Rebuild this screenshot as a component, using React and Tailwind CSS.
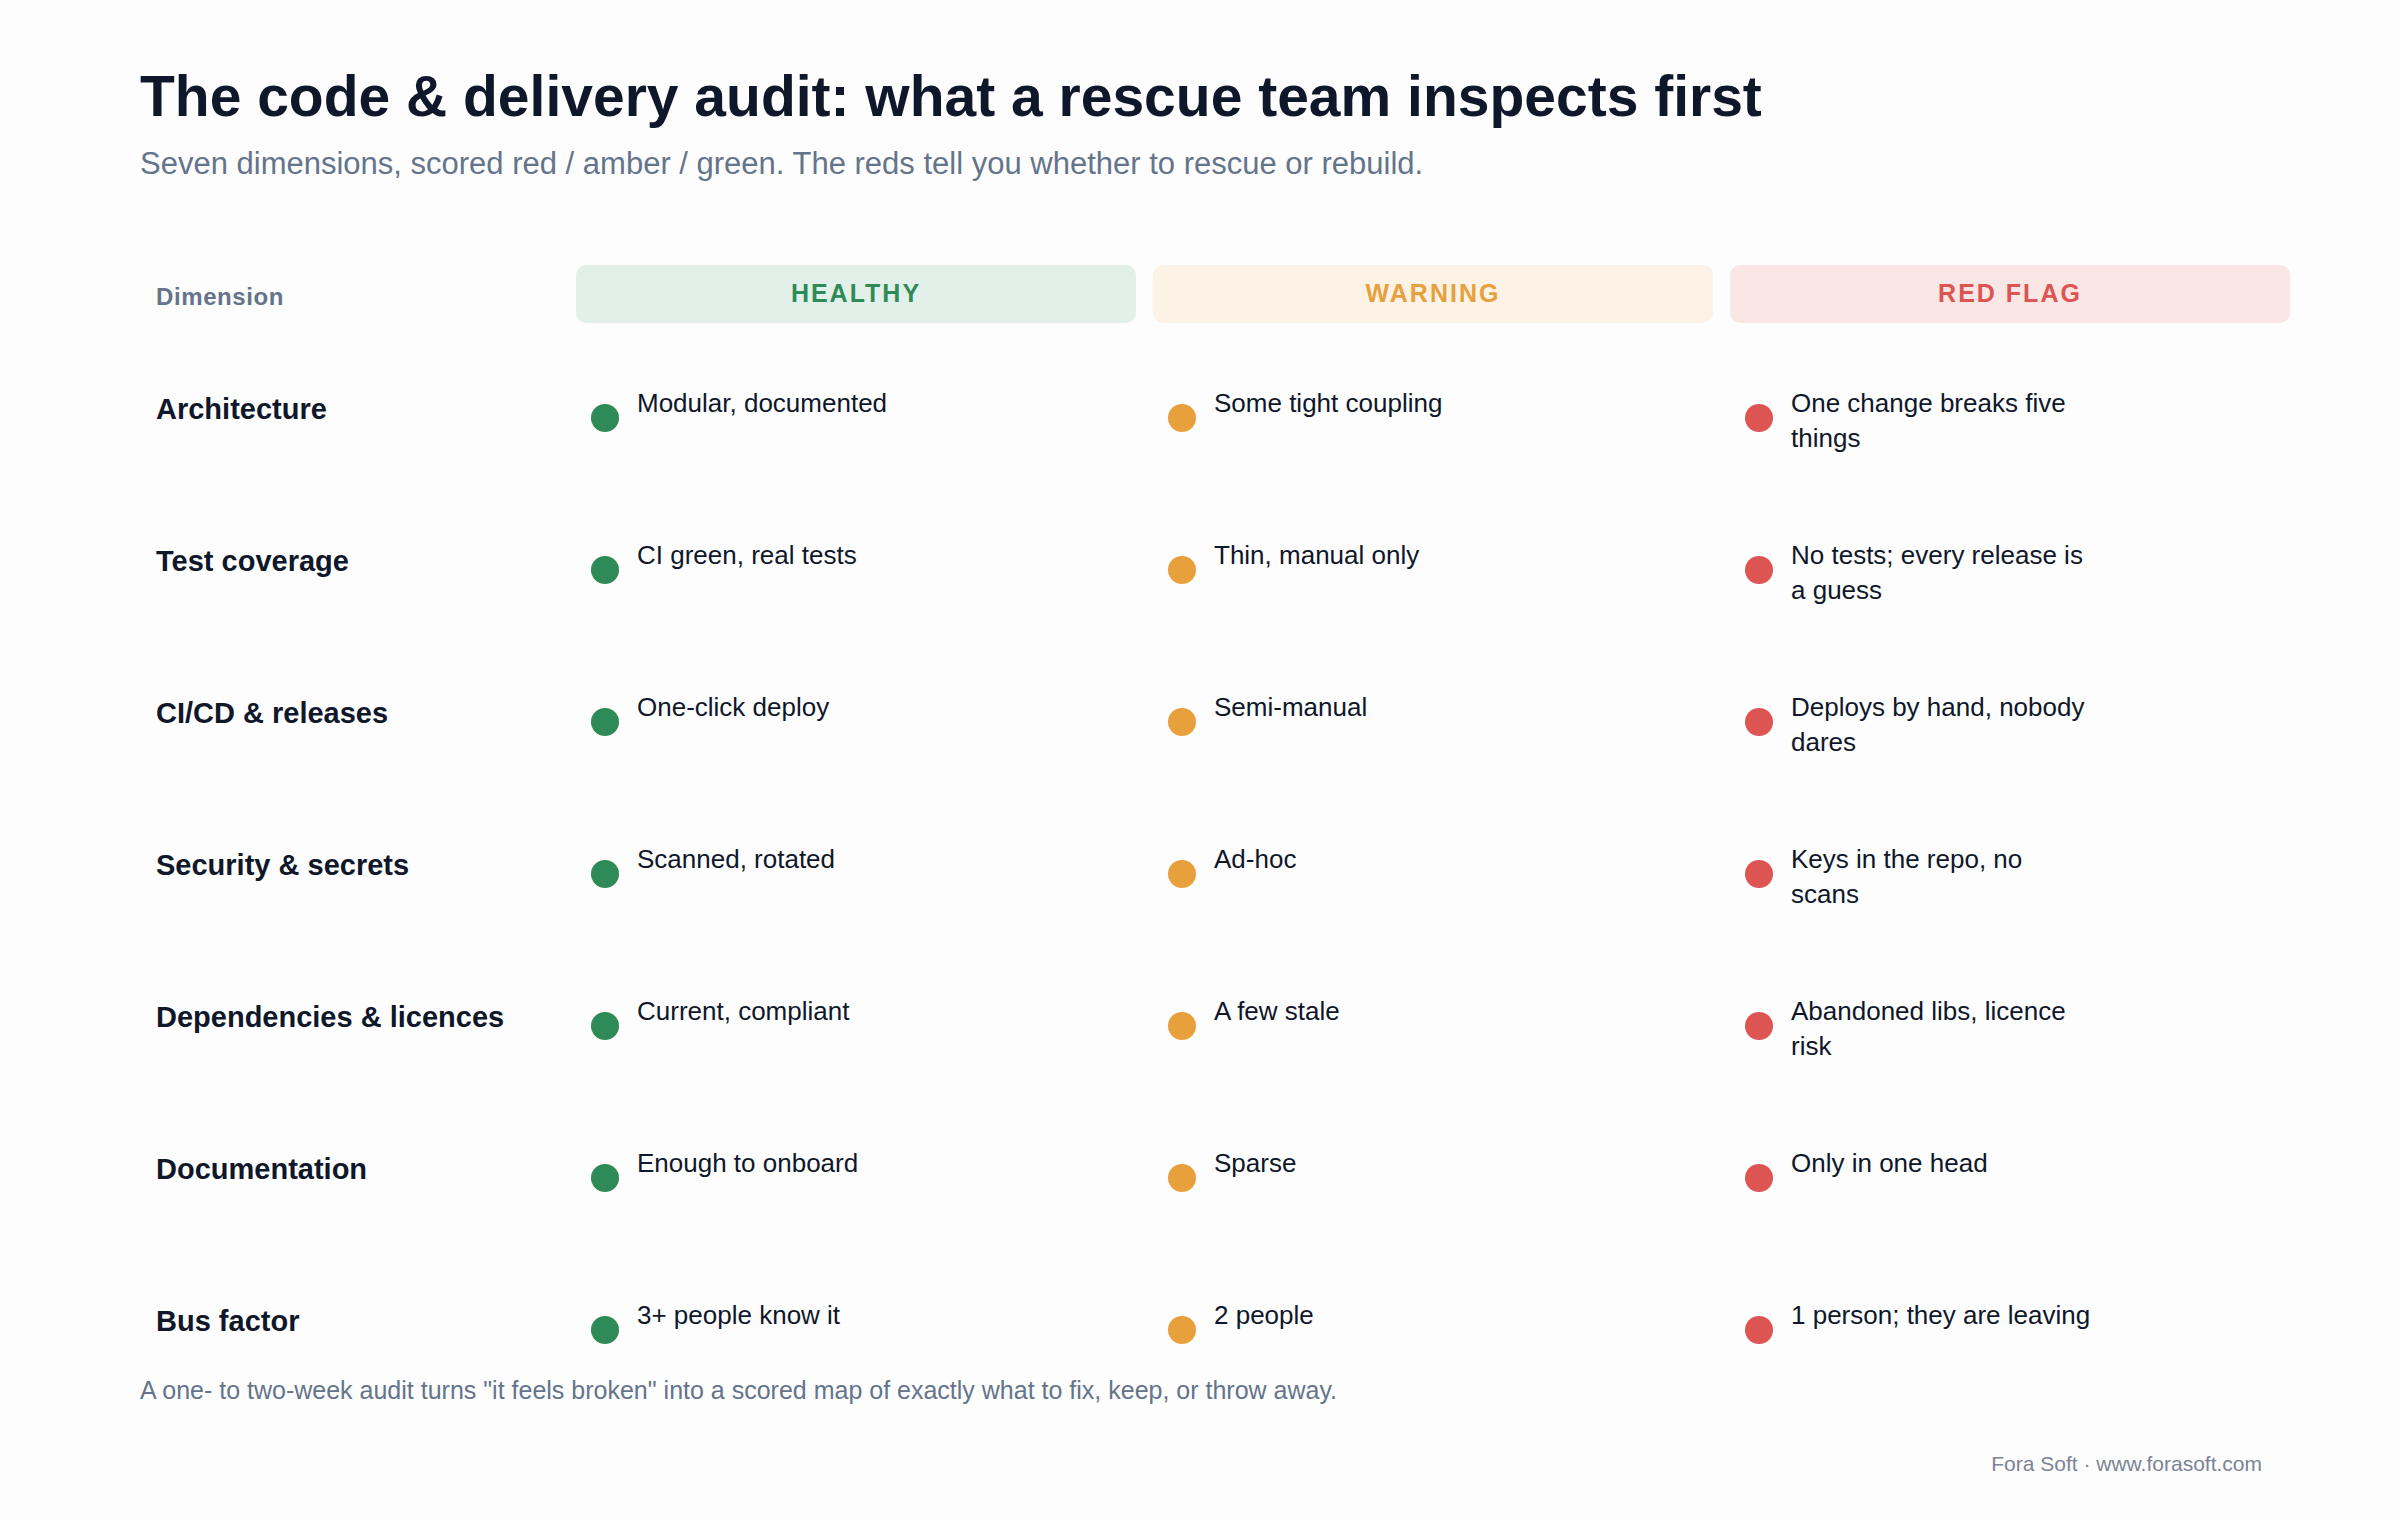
const rows = [
  ["Architecture", "Modular, documented", "Some tight coupling", "One change breaks five things"],
  ["Test coverage", "CI green, real tests", "Thin, manual only", "No tests; every release is a guess"],
  ["CI/CD & releases", "One-click deploy", "Semi-manual", "Deploys by hand, nobody dares"],
  ["Security & secrets", "Scanned, rotated", "Ad-hoc", "Keys in the repo, no scans"],
  ["Dependencies & licences", "Current, compliant", "A few stale", "Abandoned libs, licence risk"],
  ["Documentation", "Enough to onboard", "Sparse", "Only in one head"],
  ["Bus factor", "3+ people know it", "2 people", "1 person; they are leaving"],
];
const dots = ["bg-[#2e8b57]", "bg-[#e8a03c]", "bg-[#dc5552]"];

function Cell({ text, dot }) {
  return (
    <div className="flex items-start pl-[15px]">
      <span className={`mt-[34px] w-[28px] h-[28px] rounded-full shrink-0 ${dot}`} />
      <span className="ml-[18px] mt-[16px] max-w-[306px] text-[26px] leading-[35px] text-[#0f172a]">{text}</span>
    </div>
  );
}

export default function App() {
  return (
    <div className="w-[2400px] h-[1520px] bg-[#fdfdfd] px-[140px] pt-[62px] relative" style={{ fontFamily: '"Liberation Sans", Arial, sans-serif' }}>
      <h1 className="text-[57px] leading-[68px] font-bold text-[#0f172a]">The code &amp; delivery audit: what a rescue team inspects first</h1>
      <p className="mt-[16px] text-[31px] leading-[36px] text-[#64748b]">Seven dimensions, scored red / amber / green. The reds tell you whether to rescue or rebuild.</p>
      <div className="mt-[83px] grid grid-cols-[419px_560px_560px_560px] gap-x-[17px]">
        <div className="flex items-center pl-[16px] pt-[6px] text-[24px] font-bold text-[#64748b] tracking-wide h-[58px]">Dimension</div>
        <div className="h-[58px] rounded-[10px] bg-[#e3f0ea] flex items-center justify-center text-[25px] font-bold tracking-[0.08em] text-[#2e8b57]">HEALTHY</div>
        <div className="h-[58px] rounded-[10px] bg-[#fcf2e6] flex items-center justify-center text-[25px] font-bold tracking-[0.08em] text-[#e8a03c]">WARNING</div>
        <div className="h-[58px] rounded-[10px] bg-[#fae6e4] flex items-center justify-center text-[25px] font-bold tracking-[0.08em] text-[#dc5552]">RED FLAG</div>
      </div>
      <div className="mt-[47px] flex flex-col">
        {rows.map((r, i) => (
          <div key={i} className={`grid grid-cols-[419px_560px_560px_560px] gap-x-[17px] ${i < 6 ? "h-[152px]" : ""}`}>
            <div className="pl-[16px] mt-[22px] text-[29px] leading-[34px] font-bold text-[#0f172a]">{r[0]}</div>
            <Cell text={r[1]} dot={dots[0]} />
            <Cell text={r[2]} dot={dots[1]} />
            <Cell text={r[3]} dot={dots[2]} />
          </div>
        ))}
      </div>
      <p className="mt-[30px] text-[25px] leading-[32px] text-[#64748b]">A one- to two-week audit turns "it feels broken" into a scored map of exactly what to fix, keep, or throw away.</p>
      <div className="mt-[42px] pr-[0px] flex justify-end">
        <span className="mr-[-2px] text-[21px] text-[#7b8494]">Fora Soft · www.forasoft.com</span>
      </div>
    </div>
  );
}
